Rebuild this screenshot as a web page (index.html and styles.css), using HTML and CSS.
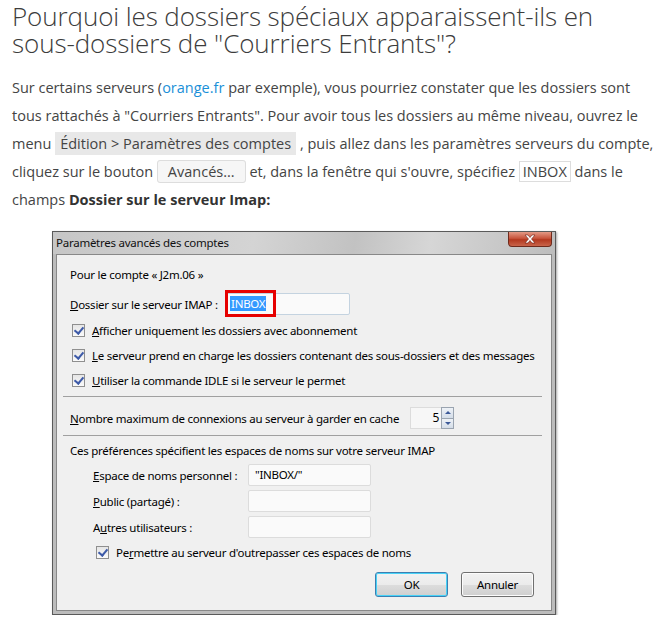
FILE: index.html
```html
<!DOCTYPE html>
<html lang="fr">
<head>
<meta charset="utf-8">
<link rel="stylesheet" href="styles.css">
</head>
<body>
<main class="article">
  <h2 class="title">Pourquoi les dossiers spéciaux apparaissent-ils en sous-dossiers de "Courriers Entrants"?</h2>
  <p class="text">Sur certains serveurs (<a class="link" href="#">orange.fr</a> par exemple), vous pourriez constater que les dossiers sont tous rattachés à "Courriers Entrants". Pour avoir tous les dossiers au même niveau, ouvrez le menu <span class="menu">Édition &gt; Paramètres des comptes</span> , puis allez dans les paramètres serveurs du compte, cliquez sur le bouton <span class="btn">Avancés...</span> et, dans la fenêtre qui s'ouvre, spécifiez <span class="kbd">INBOX</span> dans le champs <strong>Dossier sur le serveur Imap:</strong></p>

  <div class="dialog">
    <div class="titlebar">
      <span class="wtitle">Paramètres avancés des comptes</span>
      <span class="close"><svg width="16" height="10" viewBox="0 0 16 10"><path d="M3 1 L6 1 L8 3.5 L10 1 L13 1 L9.5 5 L13 9 L10 9 L8 6.5 L6 9 L3 9 L6.5 5 Z" fill="#fff" stroke="#6b1d10" stroke-width="0.6"/></svg></span>
    </div>
    <div class="client">
      <div class="row first">Pour le compte « J2m.06 »</div>
      <div class="row imap">
        <span class="lbl-imap"><u>D</u>ossier sur le serveur IMAP :</span>
        <span class="field wide"><span class="hl-box"><span class="sel">INBOX</span></span></span>
      </div>
      <div class="check"><span class="cb"></span><span><u>A</u>fficher uniquement les dossiers avec abonnement</span></div>
      <div class="check"><span class="cb"></span><span><u>L</u>e serveur prend en charge les dossiers contenant des sous-dossiers et des messages</span></div>
      <div class="check"><span class="cb"></span><span><u>U</u>tiliser la commande IDLE si le serveur le permet</span></div>
      <hr class="sep sep1">
      <div class="row conn">
        <span class="lbl-conn"><u>N</u>ombre maximum de connexions au serveur à garder en cache</span>
        <span class="spin"><span class="spin-val">5</span><span class="arrows"><span class="arr up"></span><span class="arr down"></span></span></span>
      </div>
      <hr class="sep sep2">
      <div class="row ns">Ces préférences spécifient les espaces de noms sur votre serveur IMAP</div>
      <div class="nsrow"><span class="nslbl"><u>E</u>space de noms personnel :</span><span class="field ns-field">"INBOX/"</span></div>
      <div class="nsrow"><span class="nslbl"><u>P</u>ublic (partagé) :</span><span class="field ns-field"></span></div>
      <div class="nsrow"><span class="nslbl">A<u>u</u>tres utilisateurs :</span><span class="field ns-field"></span></div>
      <div class="check indent"><span class="cb"></span><span>Pe<u>r</u>mettre au serveur d'outrepasser ces espaces de noms</span></div>
      <div class="buttons">
        <span class="wbtn ok">OK</span>
        <span class="wbtn">Annuler</span>
      </div>
    </div>
  </div>
</main>
</body>
</html>
```

FILE: styles.css
```css
* { box-sizing: border-box; }
html, body { margin: 0; padding: 0; background: #fff; }
.article { padding: 3px 5px 0 12px; font-family: "Open Sans", sans-serif; }
.title {
  font-family: "Open Sans", sans-serif;
  font-weight: 300;
  font-size: 26px;
  line-height: 27px;
  color: #3c3c3c;
  margin: 0 0 17px 0;
  letter-spacing: -0.1px;
}
.text {
  font-size: 14.5px;
  line-height: 28px;
  color: #444;
  margin: 0;
}
.link { color: #1a8fd8; text-decoration: none; }
.menu { background: #e8e8e8; padding: 2px 5px; }
.btn { border: 1px solid #ddd; border-radius: 3px; background: #f6f6f6; padding: 1px 10px; }
.kbd { border: 1px solid #ddd; padding: 0 3px; }
strong { font-weight: 700; color: #333; }

.dialog {
  margin: 17px 0 0 40px;
  width: 504px;
  border: 1px solid #5a5a5a;
  background: #bcbcbc;
  padding: 0 3px 3px 3px;
  box-shadow: 1px 1px 2px rgba(0,0,0,.35);
  font-family: "Noto Sans", "Open Sans", sans-serif;
  font-size: 11.5px;
  letter-spacing: -0.25px;
  color: #000;
}
.titlebar {
  height: 22px;
  display: flex;
  justify-content: space-between;
  align-items: flex-start;
  background: linear-gradient(100deg, #c6c6c6 0%, #d4d4d4 40%, #c2c2c2 60%, #d6d6d6 75%, #bdbdbd 100%);
  margin: 0 -3px;
  padding: 0 3px 0 3px;
}
.wtitle { padding-top: 3px; font-size: 11.5px; color: #111; }
.close {
  width: 44px; height: 15px;
  background: linear-gradient(#e39a86, #c8543c 45%, #b3381f 55%, #c9644a);
  border: 1px solid #6e2a1c;
  border-top: none;
  border-radius: 0 0 4px 4px;
  display: flex; align-items: center; justify-content: center;
}
.client {
  background: #f0f0f0;
  border: 1px solid #888;
  padding: 10px 4px 13px 13px;
  display: flex;
  flex-direction: column;
}
.row { display: flex; align-items: center; }
.first { height: 18px; margin-bottom: 10px; }
.imap { height: 22px; margin-bottom: 3px; }
.lbl-imap { width: 156px; }
.field {
  display: inline-block;
  height: 22px;
  border: 1px solid #c4d3e0;
  background: #fafafa;
  border-radius: 2px;
}
.wide { width: 124px; position: relative; }
.hl-box {
  position: absolute; left: -2px; top: -4px;
  width: 51px; height: 27px;
  border: 3px solid #e60000;
  display: flex; align-items: center; padding-left: 2px;
}
.sel { background: #3399ff; color: #fff; padding: 0 1px; line-height: 15px; }
.check { display: flex; align-items: center; height: 25px; white-space: nowrap; }
.cb {
  width: 13px; height: 13px;
  border: 1px solid #8f8f8f;
  background: linear-gradient(#e6e6e6, #fafafa);
  margin: 0 7px 0 2px;
  position: relative;
  flex: none;
}
.cb::after {
  content: "";
  position: absolute; left: 3px; top: 0px;
  width: 4px; height: 7px;
  border: solid #3d5aa8;
  border-width: 0 2px 2px 0;
  transform: rotate(40deg);
}
.indent { margin-left: 24px; margin-top: -2px; }
.sep { border: none; border-top: 1px solid #a0a0a0; margin: 3px 5px 10px -7px; }
.sep2 { margin: 5px 5px 5px -7px; }
.conn { height: 22px; gap: 11px; margin-bottom: 1px; }
.spin { display: flex; }
.spin-val {
  width: 31px; height: 22px;
  border: 1px solid #dcdcdc; border-right: none;
  background: #f7f7f7;
  text-align: right; padding-right: 2px; font-size: 12px; line-height: 20px;
}
.arrows { display: flex; flex-direction: column; width: 13px; height: 22px; border: 1px solid #9aa4b0; }
.arr { flex: 1; background: linear-gradient(#eef2f7, #d4dde8); position: relative; }
.arr.up { border-bottom: 1px solid #9aa4b0; }
.arr.up::after { content: ""; position: absolute; left: 3px; top: 3px; border: 3px solid transparent; border-bottom: 3px solid #3b5998; border-top: none; }
.arr.down::after { content: ""; position: absolute; left: 3px; top: 3px; border: 3px solid transparent; border-top: 3px solid #3b5998; border-bottom: none; }
.ns { height: 18px; margin-bottom: 5px; }
.nsrow { display: flex; align-items: center; height: 22px; margin-bottom: 4px; padding-left: 23px; }
.nslbl { width: 155px; }
.ns-field { width: 123px; border-color: #dcdcdc; padding: 2px 6px; line-height: 16px; }
.buttons { display: flex; justify-content: flex-end; gap: 13px; margin-top: 7px; padding-right: 13px; }
.wbtn {
  width: 73px; height: 25px;
  border: 1px solid #707070;
  border-radius: 3px;
  background: linear-gradient(#f2f2f2 0%, #ebebeb 50%, #dddddd 51%, #cfcfcf 100%);
  display: flex; align-items: center; justify-content: center;
  box-shadow: inset 0 0 0 1px #fcfcfc;
}
.wbtn.ok { border-color: #3c7fb1; box-shadow: inset 0 0 0 1px #48d2f7; }
```
